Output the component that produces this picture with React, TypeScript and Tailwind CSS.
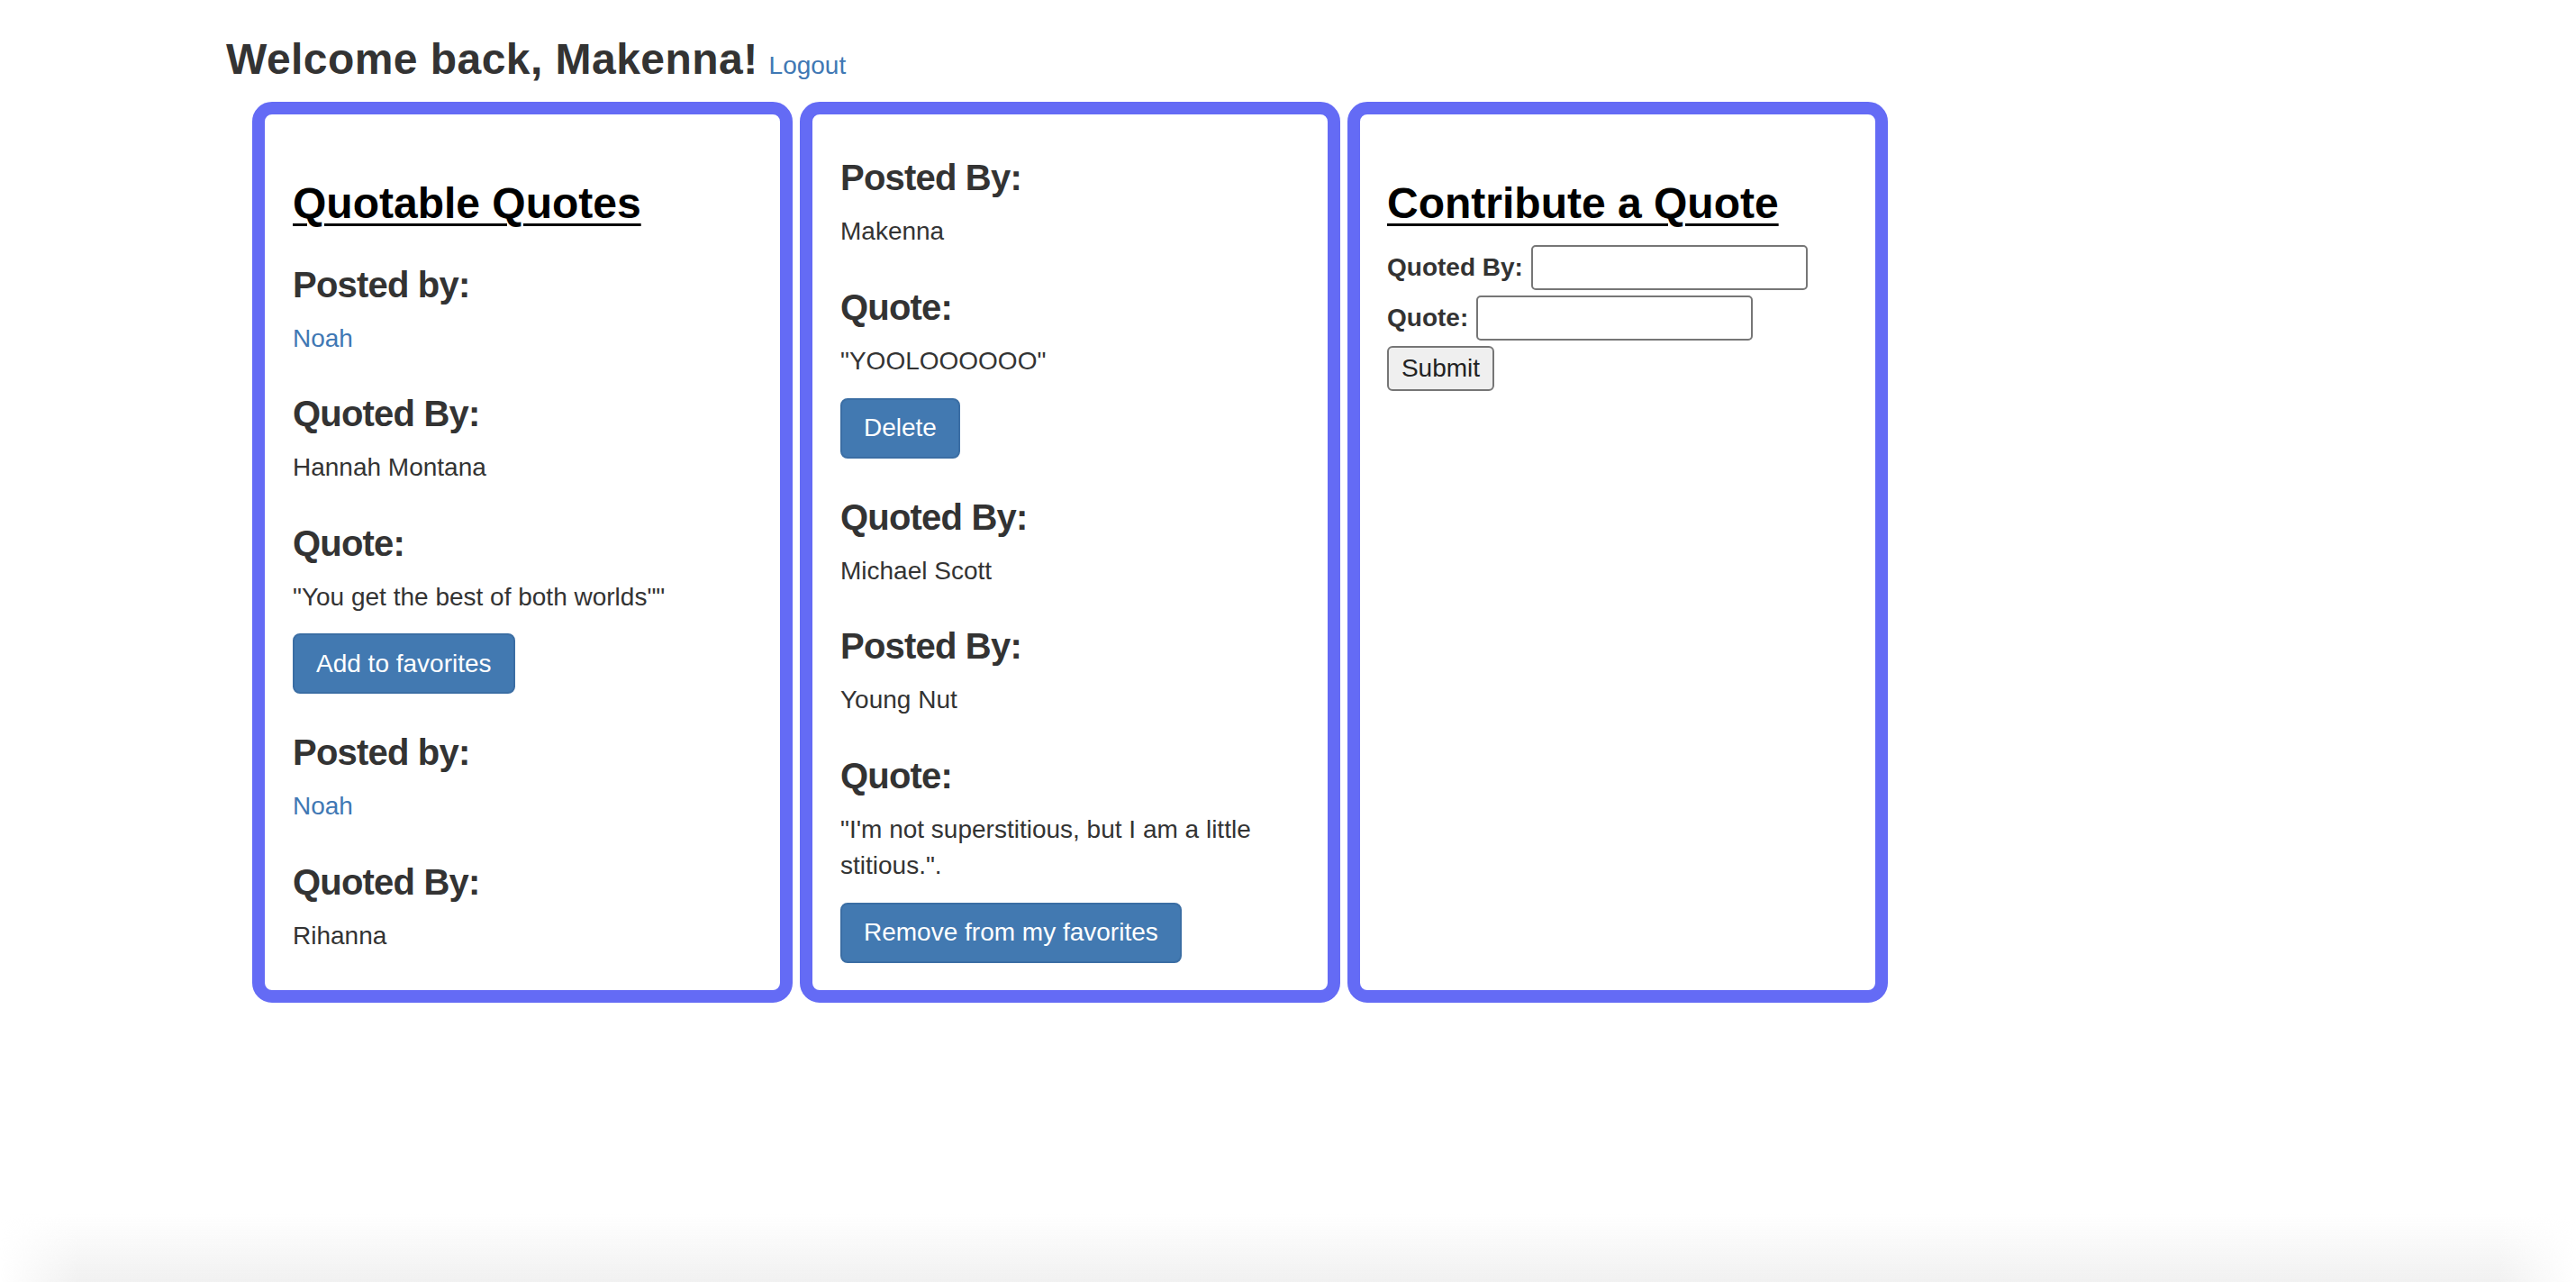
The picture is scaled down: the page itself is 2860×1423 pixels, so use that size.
import type { ReactNode } from 'react'

function Card({ children, className = '' }: { children: ReactNode; className?: string }) {
  return (
    <div className={`h-[1000px] w-[600px] shrink-0 overflow-hidden rounded-[22px] border-[14px] border-[#646bf5] bg-white py-[32px] ${className}`}>
      {children}
    </div>
  )
}

function Label({ children, className = '' }: { children: ReactNode; className?: string }) {
  return <h4 className={`text-[40px] font-bold leading-[44px] tracking-[-0.8px] text-[#333] ${className}`}>{children}</h4>
}

function Text({ children, className = '' }: { children: ReactNode; className?: string }) {
  return <p className={`text-[28px] leading-[40px] text-[#333] ${className}`}>{children}</p>
}

function BlueButton({ children, className = '' }: { children: ReactNode; className?: string }) {
  return (
    <div className={`flex ${className}`}>
      <button className="rounded-[8px] border-2 border-[#3b6ea4] bg-[#4279b1] px-[24px] py-[11.5px] text-[28px] leading-[40px] text-white">
        {children}
      </button>
    </div>
  )
}

export default function App() {
  return (
    <div className="relative min-h-screen bg-white font-['Liberation_Sans',Arial,sans-serif] text-[#333]">
      <div className="pl-[251px]">
        <div className="pt-[40px] flex items-baseline">
          <h3 className="text-[48px] font-bold leading-[52.8px] tracking-[0.45px] text-[#333]">Welcome back, Makenna!</h3>
          <a href="#" className="ml-[12px] text-[28px] text-[#3f78b4]">Logout</a>
        </div>

        <div className="mt-[19px] ml-[29px] flex gap-[8px]">
          <Card className="pl-[31px] pr-[32px]">
            <h3 className="mt-[41px] text-[48px] font-bold leading-[52.8px] text-black underline decoration-[3px] underline-offset-[6px]">Quotable Quotes</h3>
            <Label className="mt-[41px]">Posted by:</Label>
            <Text className="mt-[18px]"><a href="#" className="text-[#3f78b4]">Noah</a></Text>
            <Label className="mt-[41.5px]">Quoted By:</Label>
            <Text className="mt-[18px]">Hannah Montana</Text>
            <Label className="mt-[41.5px]">Quote:</Label>
            <Text className="mt-[18px]">"You get the best of both worlds""</Text>
            <BlueButton className="mt-[20.5px]">Add to favorites</BlueButton>
            <Label className="mt-[43px]">Posted by:</Label>
            <Text className="mt-[18px]"><a href="#" className="text-[#3f78b4]">Noah</a></Text>
            <Label className="mt-[41.5px]">Quoted By:</Label>
            <Text className="mt-[18px]">Rihanna</Text>
          </Card>

          <Card className="pl-[31px] pr-[32px]">
            <Label className="mt-[16px]">Posted By:</Label>
            <Text className="mt-[18px]">Makenna</Text>
            <Label className="mt-[41.5px]">Quote:</Label>
            <Text className="mt-[18px]">"YOOLOOOOOO"</Text>
            <BlueButton className="mt-[21px]">Delete</BlueButton>
            <Label className="mt-[43px]">Quoted By:</Label>
            <Text className="mt-[18px]">Michael Scott</Text>
            <Label className="mt-[41.5px]">Posted By:</Label>
            <Text className="mt-[18px]">Young Nut</Text>
            <Label className="mt-[41.5px]">Quote:</Label>
            <Text className="mt-[18px]">"I'm not superstitious, but I am a little stitious.".</Text>
            <BlueButton className="mt-[21px]">Remove from my favorites</BlueButton>
          </Card>

          <Card className="pl-[30px] pr-[32px]">
            <h3 className="mt-[41px] text-[48px] font-bold leading-[52.8px] text-black underline decoration-[3px] underline-offset-[6px]">Contribute a Quote</h3>
            <form className="mt-[19px] flex flex-col items-start gap-[6px]" onSubmit={(e) => e.preventDefault()}>
              <div className="flex items-center">
                <label className="mr-[9px] text-[28px] font-bold text-[#333]">Quoted By:</label>
                <input type="text" className="h-[50px] w-[307px] rounded-[5px] border-2 border-[#767676] bg-white px-[4px] text-[26px]" />
              </div>
              <div className="flex items-center">
                <label className="mr-[9px] text-[28px] font-bold text-[#333]">Quote:</label>
                <input type="text" className="h-[50px] w-[307px] rounded-[5px] border-2 border-[#767676] bg-white px-[4px] text-[26px]" />
              </div>
              <button type="submit" className="h-[50px] w-[119px] rounded-[6px] border-2 border-[#767676] bg-[#efefef] text-[28px] leading-[40px] text-[#222]">
                Submit
              </button>
            </form>
          </Card>
        </div>
      </div>

      <div className="pointer-events-none fixed inset-x-0 bottom-0 h-[75px] bg-gradient-to-b from-white/0 to-[#f1f1f1] [mask-image:linear-gradient(to_right,transparent,black_3%,black_97%,transparent)]" />
    </div>
  )
}
